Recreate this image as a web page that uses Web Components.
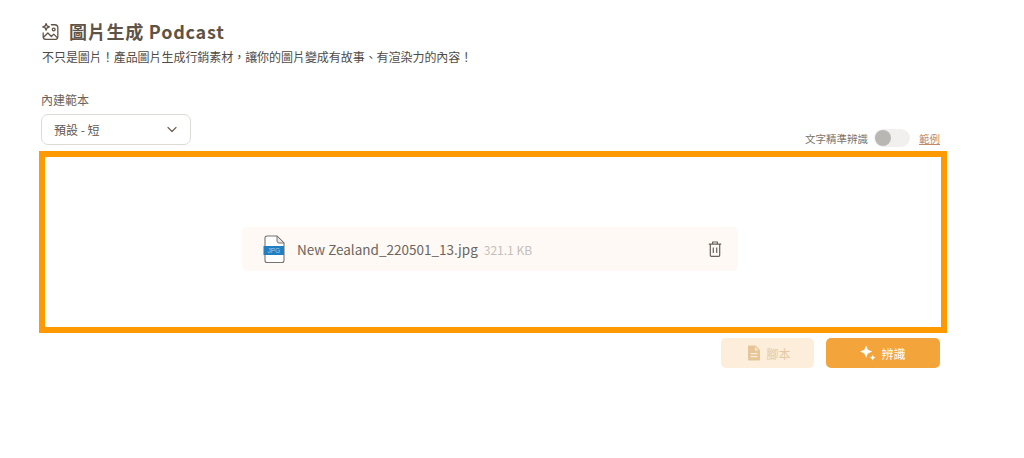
<!DOCTYPE html>
<html lang="zh-Hant"><head><meta charset="utf-8">
<style>
html,body{margin:0;padding:0;background:#fff}
body{font-family:"Noto Sans CJK TC","Noto Sans",sans-serif;color:#5c5247;width:1024px;height:458px;overflow:hidden}
</style></head><body>
<podcast-page></podcast-page>
<template id="page-t"><style>
:host{display:block;padding:19px 77px 0 39px;box-sizing:border-box;width:1024px}
.title{display:flex;align-items:center;gap:10px;padding-left:3px;height:24px;font-size:18px;font-weight:700;letter-spacing:.75px;color:#5f5346;line-height:24px}
.sub{margin:4px 0 0 3px;font-size:12px;letter-spacing:-.05px;line-height:20px;color:#4f4a44;height:20px;white-space:nowrap}
.label{margin:23px 0 0 2px;font-size:12px;line-height:20px;height:20px;color:#6b6359}
.row{display:flex;justify-content:space-between;align-items:flex-end;margin-top:4px;padding:0 7px 0 2px}
.drop{margin-top:6px;height:182px;box-sizing:border-box;border:6px solid #ff9900;display:flex;align-items:center;justify-content:center;padding-right:6px;padding-top:14px}
.actions{display:flex;justify-content:flex-end;gap:12px;margin-top:5px;padding-right:7px}
svg{display:block;flex:none}
</style>
<div class="title"><svg width="17" height="17" viewBox="1.500 1 14.500 14.500" fill="none" stroke="#5f5346" stroke-width="1.100" stroke-linecap="round" stroke-linejoin="round"><path d="M9.500 2.500h3a2.500 2.500 0 0 1 2.500 2.500v8a2 2 0 0 1-2 2H5a2.500 2.500 0 0 1-2.500-2.500V9.500"/><path d="M3 13l3.500-3.500 3 3 2-2 3 3"/><circle cx="11.500" cy="6.500" r="1.200"/><path d="M5 1.500l.8 2 2 .8-2 .8-.8 2-.8-2-2-.8 2-.8z"/></svg><span>圖片生成 Podcast</span></div>
<div class="sub">不只是圖片！產品圖片生成行銷素材，讓你的圖片變成有故事、有渲染力的內容！</div>
<div class="label">內建範本</div>
<div class="row"><select-box>預設 - 短</select-box><precise-toggle></precise-toggle></div>
<div class="drop"><file-row name="New Zealand_220501_13.jpg" size="321.1 KB"></file-row></div>
<div class="actions">
<action-button kind="soft" style="width:93px;padding-left:3px"><svg slot="icon" width="14" height="16" viewBox="0 0 14 16"><path fill="#e6c596" fill-rule="evenodd" d="M2 .500h6.500L13 5v9.500a1 1 0 0 1-1 1H2a1 1 0 0 1-1-1v-13a1 1 0 0 1 1-1zM8 2v3.500h3.500zM3.500 8v1.300h7V8zm0 3v1.300h7V11z"/></svg>腳本</action-button>
<action-button kind="solid" style="width:114px"><svg slot="icon" width="16" height="16" viewBox="0 0 17 17" fill="#fff"><path d="M6.500 .5l1.900 4.600 4.600 1.900-4.600 1.900-1.900 4.600-1.900-4.600L0 7l4.600-1.900z"/><path d="M13.500 10.500l.9 2.100 2.100.9-2.100.9-.9 2.100-.9-2.100-2.100-.9 2.100-.9z"/></svg>辨識</action-button>
</div></template>

<template id="select-t"><style>
:host{display:flex;align-items:center;justify-content:space-between;box-sizing:border-box;width:150px;height:31px;border:1px solid #dedbd6;border-radius:7px;padding:0 13px 0 12px;font-size:12px;color:#5f574d;background:#fff}
</style><slot></slot><svg width="10" height="7" viewBox="0 0 10 7" fill="none" stroke="#6b6359" stroke-width="1.200" stroke-linecap="round" stroke-linejoin="round"><path d="M1 1.500L5 5.500l4-4"/></svg></template>

<template id="toggle-t"><style>
:host{display:flex;align-items:center;height:20px;font-size:10.500px;color:#7a7369;margin-bottom:-3px}
.t{margin-left:6px;width:36px;height:18px;border-radius:9px;background:#f1f0ef;position:relative}
.k{position:absolute;left:1px;top:1px;width:16px;height:16px;border-radius:50%;background:#b9b7b4}
a{margin-left:9px;font-size:10.500px;color:#c48a66;text-decoration:underline}
</style><span>文字精準辨識</span><div class="t"><div class="k"></div></div><a>範例</a></template>

<template id="file-t"><style>
:host{display:flex;align-items:center;box-sizing:border-box;width:496px;height:44px;background:#fef9f4;border-radius:5px;padding:0 16px 0 21px;font-size:13.500px;color:#6d6560}
.n{margin-left:12px;white-space:nowrap}.s{margin-left:6px;font-size:12px;color:#c3bfba;white-space:nowrap;flex:1}
svg{display:block;flex:none}
</style><svg width="22" height="29" viewBox="0 0 22 29"><path d="M4 1h10l7 7v17.500a2 2 0 0 1-2 2H4a2 2 0 0 1-2-2V3a2 2 0 0 1 2-2z" fill="#fff" stroke="#77736f" stroke-width="1.100"/><path d="M14 1v5a2 2 0 0 0 2 2h5z" fill="#e8e6e3" stroke="#77736f" stroke-width="1"/><rect x="0.500" y="11" width="20.500" height="9" fill="#1f7fc0"/></svg><span class="n"><slot name="n"></slot></span><span class="s"><slot name="s"></slot></span><svg width="14" height="16" viewBox="0 0 14 16" fill="none" stroke="#6a625b" stroke-width="1.200" stroke-linejoin="round"><path d="M.8 3.200h12.400M4.600 3V1h4.800v2M2.300 3.200v11.100a1 1 0 0 0 1 1h7.400a1 1 0 0 0 1-1V3.200M5.300 6.500v5.500M8.700 6.500v5.500"/></svg></template>

<template id="btn-t"><style>
:host{display:flex;align-items:center;justify-content:center;gap:5px;height:30px;border-radius:5px;font-size:12px;box-sizing:border-box}
:host([kind=soft]){background:#fdeedb;color:#e6c9a2}
:host([kind=solid]){background:#f3a53b;color:#fff}
::slotted(svg){display:block;flex:none}
</style><slot name="icon"></slot><slot></slot></template>

<script>
function def(name,tid){customElements.define(name,class extends HTMLElement{constructor(){super();this.attachShadow({mode:'open'}).appendChild(document.getElementById(tid).content.cloneNode(true))}})}
def('select-box','select-t');def('precise-toggle','toggle-t');def('action-button','btn-t');
customElements.define('file-row',class extends HTMLElement{constructor(){super();const r=this.attachShadow({mode:'open'});r.appendChild(document.getElementById('file-t').content.cloneNode(true));r.querySelector('.n').textContent=this.getAttribute('name');r.querySelector('.s').textContent=this.getAttribute('size');
const t=document.createElementNS('http://www.w3.org/2000/svg','text');t.setAttribute('x','10.800');t.setAttribute('y','18');t.setAttribute('font-size','6.500');t.setAttribute('fill','#9fd0ef');t.setAttribute('text-anchor','middle');t.setAttribute('font-family','Liberation Sans');t.textContent='JPG';r.querySelector('svg').appendChild(t)}});
def('podcast-page','page-t');
</script>
</body></html>
